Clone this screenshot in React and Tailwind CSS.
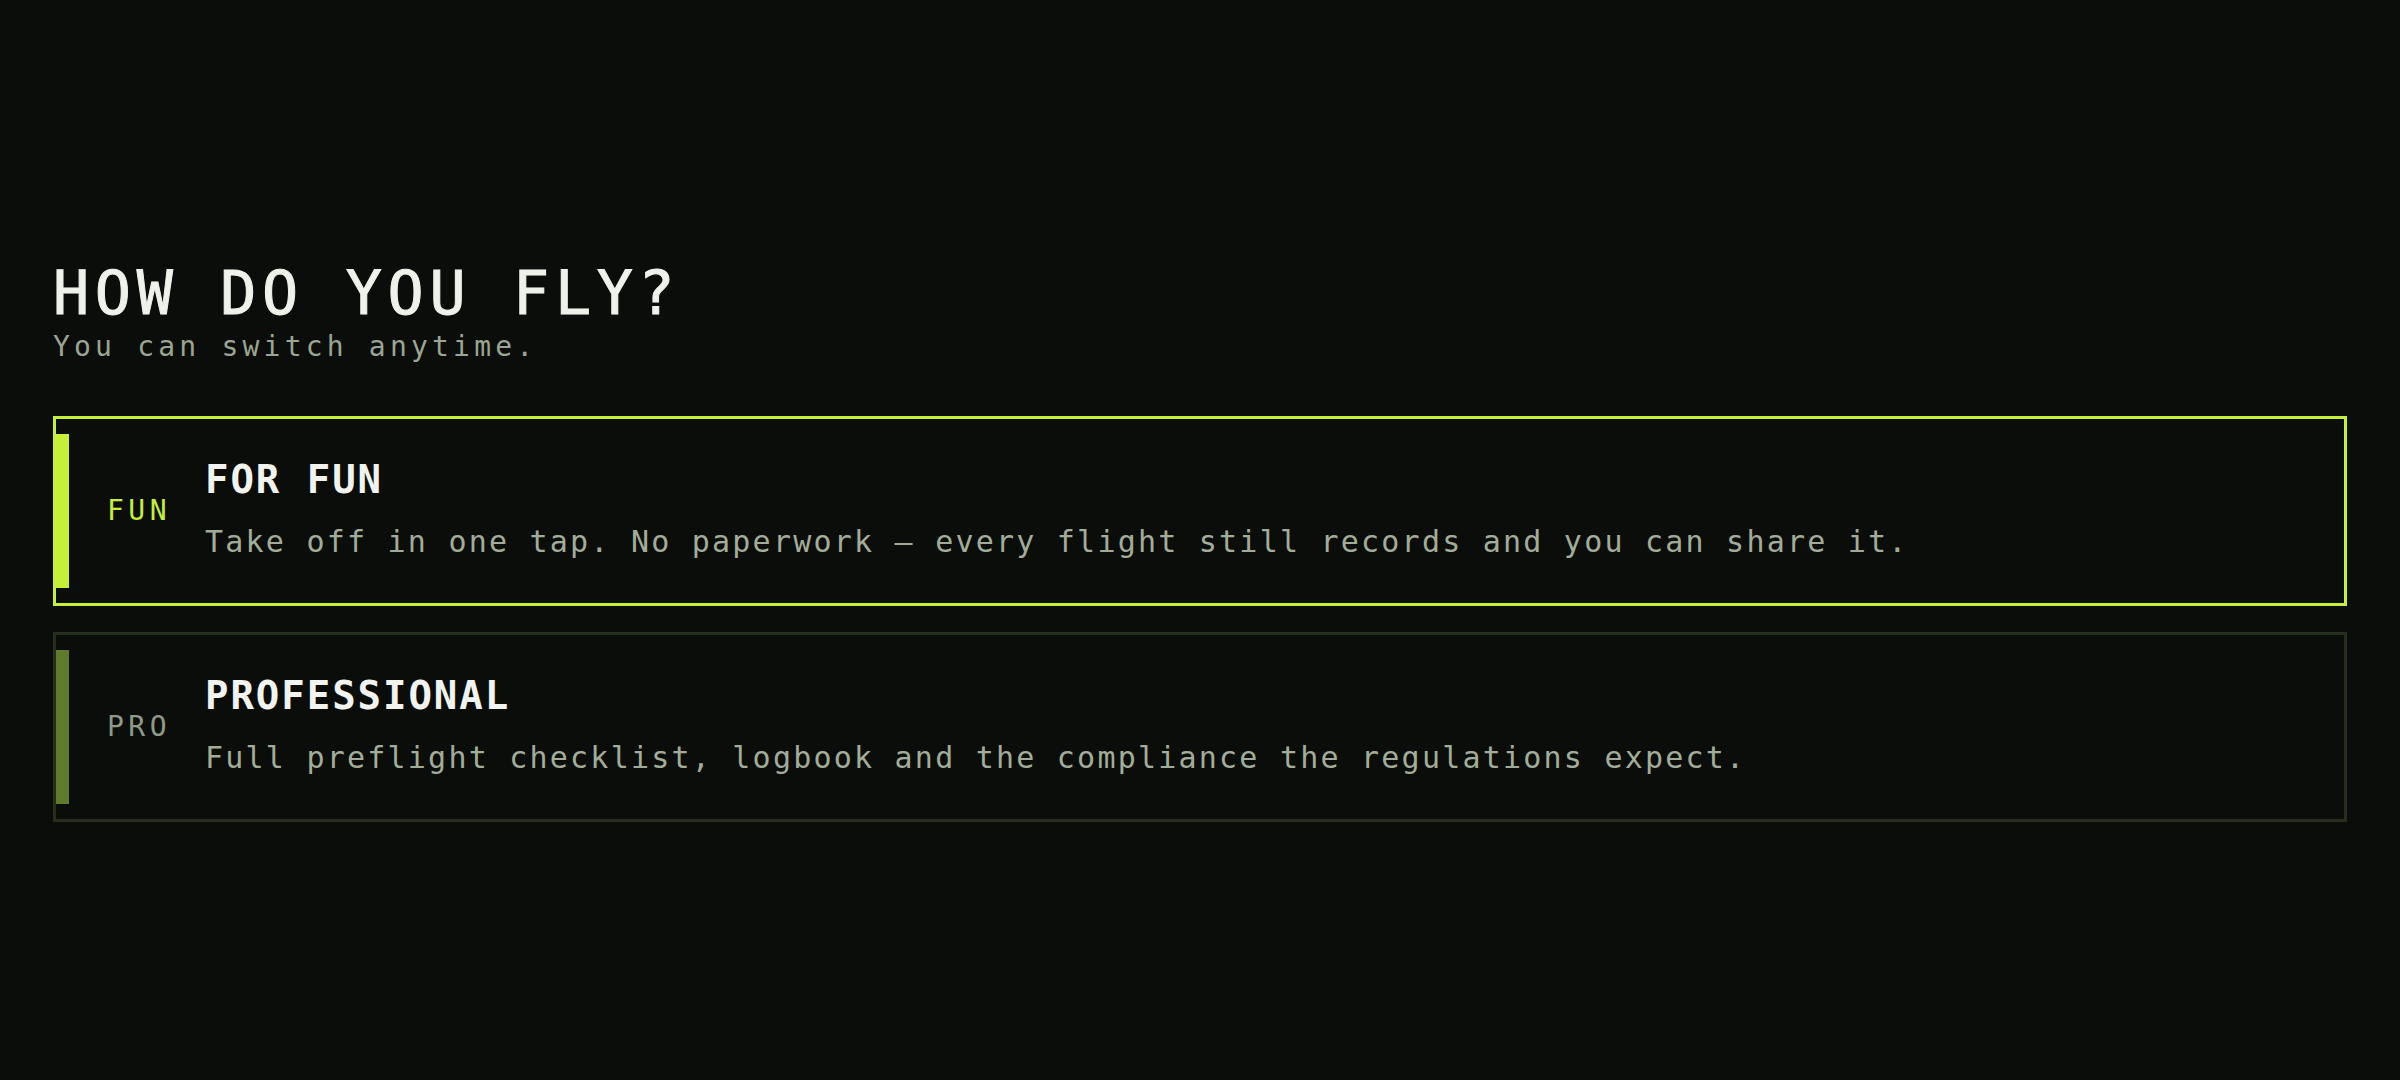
const modes = [
  {
    id: "fun",
    tag: "FUN",
    title: "FOR FUN",
    text: "Take off in one tap. No paperwork — every flight still records and you can share it.",
    active: true,
  },
  {
    id: "pro",
    tag: "PRO",
    title: "PROFESSIONAL",
    text: "Full preflight checklist, logbook and the compliance the regulations expect.",
    active: false,
  },
];

function ModeCard({ mode }) {
  const on = mode.active;
  return (
    <div
      className={
        "flex items-stretch border-[3px] " +
        (on ? "border-[#c6ef38]" : "border-[#262e1c]")
      }
    >
      {/* accent bar */}
      <div className={"w-[13px] my-[15px] " + (on ? "bg-[#c6ef38]" : "bg-[#5e7a2a]")} />
      <div
        className={
          "self-center ml-[38px] w-[58px] whitespace-nowrap text-[28px] leading-none tracking-[0.16em] " +
          (on ? "text-[#c6ef38]" : "text-[#8e9a86]")
        }
      >
        {mode.tag}
      </div>
      <div className="ml-[40px] flex flex-col gap-[28px] pt-[41px] pb-[46px]">
        <div className="text-[39px] leading-none font-bold tracking-[0.05em] text-[#f1f4ee]">
          {mode.title}
        </div>
        <div className="text-[30px] leading-none tracking-[0.074em] text-[#a2ad99]">
          {mode.text}
        </div>
      </div>
    </div>
  );
}

export default function App() {
  return (
    <div className="min-h-screen bg-[#0b0d0a] flex flex-col justify-center px-[53px] pt-[4px] font-['DejaVu_Sans_Mono',monospace]">
      <h1 className="text-[60px] leading-none tracking-[0.095em] text-[#eef2ea] [-webkit-text-stroke:1px_#eef2ea]">
        HOW DO YOU FLY?
      </h1>
      <p className="mt-[10px] text-[28px] leading-none tracking-[0.15em] text-[#9aa592]">
        You can switch anytime.
      </p>
      <div className="mt-[55px] flex flex-col gap-[26px]">
        {modes.map(m => (
          <ModeCard key={m.id} mode={m} />
        ))}
      </div>
    </div>
  );
}
